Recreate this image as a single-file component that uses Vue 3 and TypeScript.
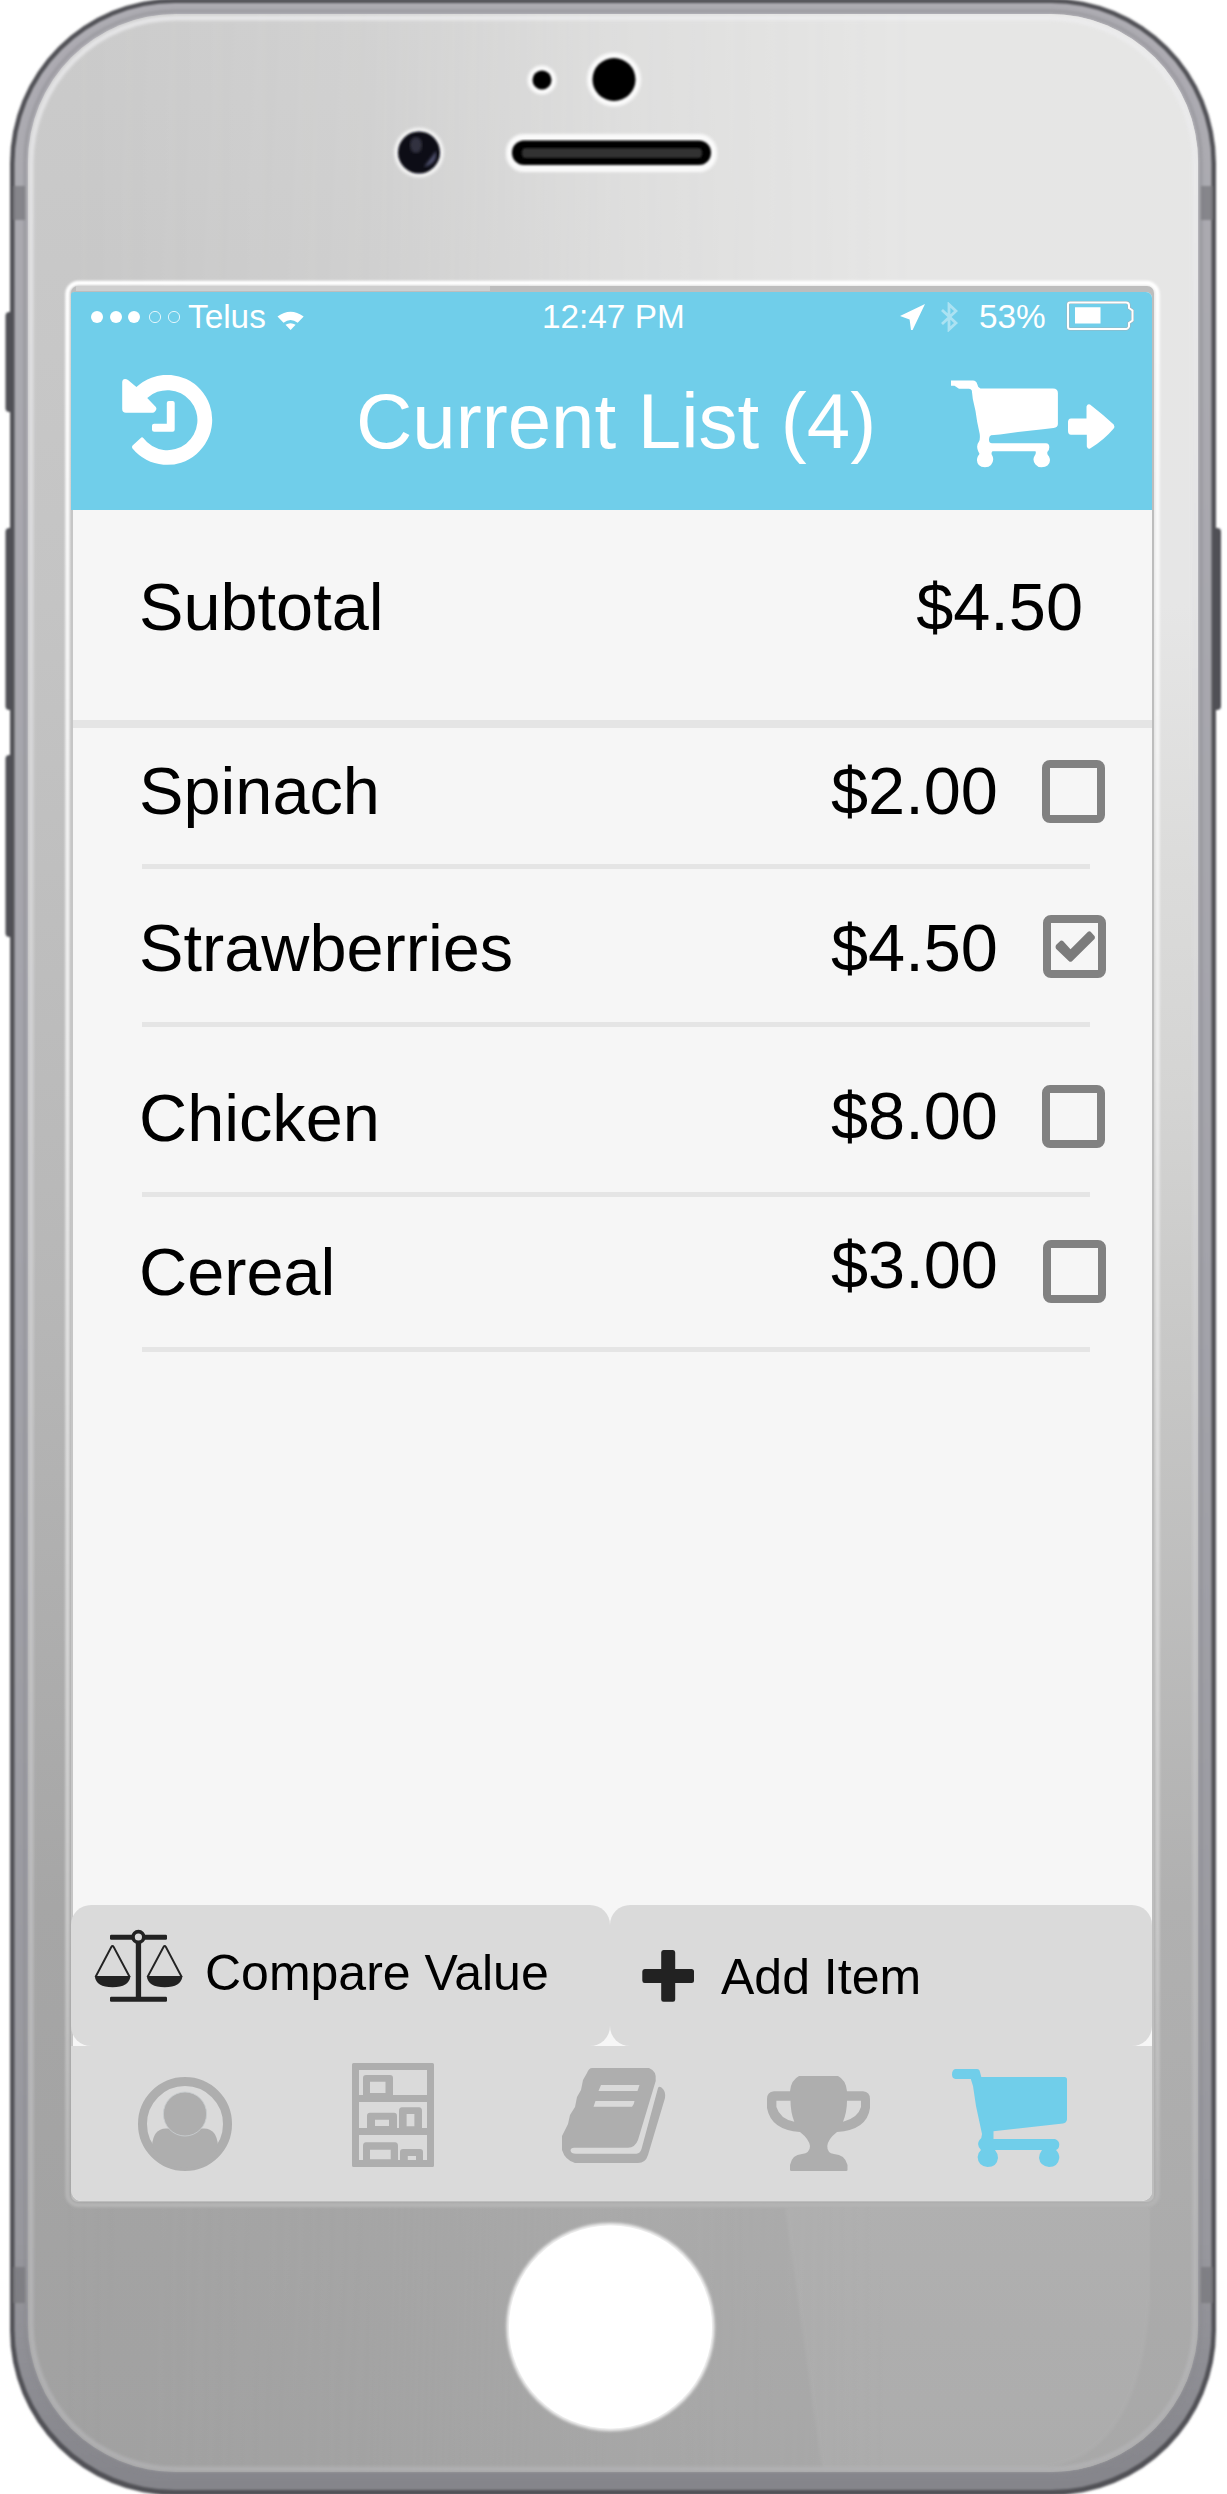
<script setup lang="ts">
import { ref, computed } from 'vue'

interface Item {
  id: string
  name: string
  price: number
  checked: boolean
}

const items = ref<Item[]>([
  { id: 'spinach', name: 'Spinach', price: 2, checked: false },
  { id: 'strawberries', name: 'Strawberries', price: 4.5, checked: true },
  { id: 'chicken', name: 'Chicken', price: 8, checked: false },
  { id: 'cereal', name: 'Cereal', price: 3, checked: false },
])

const money = (n: number): string => `$${n.toFixed(2)}`
const subtotal = computed(() =>
  items.value.filter((i) => i.checked).reduce((sum, i) => sum + i.price, 0),
)
</script>

<template>
  <div class="phone">
    <!-- Handset body -->
    <svg class="chassis" viewBox="0 0 1227 2494" aria-hidden="true">
      <defs>
        <linearGradient id="faceL" x1="0" y1="0" x2="0" y2="1">
          <stop offset="0" stop-color="#cbcbcb" />
          <stop offset="0.24" stop-color="#c4c4c4" />
          <stop offset="0.52" stop-color="#b7b7b7" />
          <stop offset="0.77" stop-color="#a6a6a6" />
          <stop offset="1" stop-color="#a1a1a1" />
        </linearGradient>
        <linearGradient id="faceR" x1="0" y1="0" x2="0" y2="1">
          <stop offset="0" stop-color="#e6e6e5" />
          <stop offset="0.24" stop-color="#e6e6e6" />
          <stop offset="0.34" stop-color="#dcdcdb" />
          <stop offset="0.44" stop-color="#d4d4d3" />
          <stop offset="0.54" stop-color="#c8c8c7" />
          <stop offset="0.77" stop-color="#b0b0b0" />
          <stop offset="1" stop-color="#a8a8a8" />
        </linearGradient>
        <linearGradient id="fade" x1="0" y1="0" x2="1" y2="0">
          <stop offset="0.05" stop-color="#000" />
          <stop offset="0.3" stop-color="#444" />
          <stop offset="0.5" stop-color="#b4b4b4" />
          <stop offset="0.75" stop-color="#fff" />
        </linearGradient>
        <linearGradient id="rim" x1="0" y1="0" x2="0" y2="1">
          <stop offset="0" stop-color="#adacb2" />
          <stop offset="0.5" stop-color="#a4a4ab" />
          <stop offset="0.9" stop-color="#98989e" />
          <stop offset="1" stop-color="#85858b" />
        </linearGradient>
        <linearGradient id="edge" x1="0" y1="0" x2="0" y2="1">
          <stop offset="0" stop-color="#eeeef0" />
          <stop offset="0.5" stop-color="#d4d4d6" />
          <stop offset="1" stop-color="#b4b4b6" />
        </linearGradient>
        <linearGradient id="lip" x1="0" y1="0" x2="0" y2="1">
          <stop offset="0" stop-color="#ffffff" />
          <stop offset="0.4" stop-color="#ececec" />
          <stop offset="0.85" stop-color="#c9c9c9" />
          <stop offset="1" stop-color="#b4b4b4" />
        </linearGradient>
        <mask id="sweep"><rect width="1227" height="2494" fill="url(#fade)" /></mask>
        <filter id="soft" x="-5%" y="-5%" width="110%" height="110%"><feGaussianBlur stdDeviation="1.6" /></filter>
        <filter id="faint" x="-5%" y="-5%" width="110%" height="110%"><feGaussianBlur stdDeviation=".8" /></filter>
      </defs>

      <!-- Side keys -->
      <g fill="#4f5055" filter="url(#faint)">
        <rect x="5.500" y="312" width="14" height="100" rx="4" />
        <rect x="5.500" y="528" width="14" height="182" rx="4" />
        <rect x="5.500" y="755" width="14" height="182" rx="4" />
        <rect x="1206" y="528" width="15" height="182" rx="4" />
      </g>
      <rect x="10" y="-1.500" width="1206" height="2497" rx="165" fill="#515156" filter="url(#faint)" />
      <rect x="14.500" y="3" width="1197" height="2487" rx="160.500" fill="url(#rim)" filter="url(#faint)" />
      <rect x="25" y="11" width="1176" height="2464" rx="150" fill="none" stroke="#88888d" stroke-width="3" opacity=".5" filter="url(#soft)" />
      <g fill="#77777b" opacity=".7" filter="url(#faint)">
        <rect x="13" y="186" width="12" height="34" />
        <rect x="1201" y="186" width="12" height="34" />
        <rect x="13" y="2267" width="12" height="36" />
        <rect x="1201" y="2267" width="12" height="36" />
      </g>
      <rect x="28" y="14" width="1170" height="2458" rx="148" fill="url(#faceL)" />
      <rect x="28" y="14" width="1170" height="2458" rx="148" fill="url(#faceR)" mask="url(#sweep)" />
      <path d="M785 2208H1150V2300Q1140 2460 1040 2468H822Z" fill="#fff" opacity=".05" filter="url(#soft)" />
      <rect x="31" y="18" width="1164" height="2451" rx="145" fill="none" stroke="url(#edge)" stroke-width="5" opacity=".75" filter="url(#soft)" />

      <!-- Lip around the display -->
      <rect x="67.500" y="283" width="1090" height="1922" rx="11" fill="none" stroke="url(#lip)" stroke-width="4.500" filter="url(#faint)" />
      <rect x="71" y="286" width="1083" height="1916" rx="7" fill="#bdbdbd" />
      <path d="M76 288.500H490" stroke="#cfcfcf" stroke-width="5" />
      <path d="M490 289H1149" stroke="#9d9d9d" stroke-width="4" filter="url(#faint)" />
      <path d="M80 2204H1144" stroke="#acacac" stroke-width="6" filter="url(#faint)" />

      <!-- Sensors, camera and earpiece -->
      <g filter="url(#soft)" fill="#fafafa">
        <circle cx="542" cy="80" r="14.500" />
        <circle cx="614" cy="79.500" r="27" />
        <circle cx="419" cy="152.500" r="25" opacity=".8" />
        <rect x="506" y="134" width="211" height="38" rx="18" />
      </g>
      <g filter="url(#faint)">
        <circle cx="542" cy="80" r="9.500" fill="#020202" />
        <circle cx="614" cy="79.500" r="21.500" fill="#000" />
        <circle cx="419" cy="152.500" r="21" fill="#0a0b18" />
      </g>
      <ellipse cx="416" cy="145" rx="6" ry="8" fill="#30303f" filter="url(#soft)" />
      <path d="M424 167L436 151Q438 164 424 167Z" fill="#4b4d69" filter="url(#soft)" />
      <rect x="512" y="140.500" width="199" height="24.500" rx="12" fill="#050505" filter="url(#faint)" />
      <rect x="522" y="148" width="180" height="10" rx="4" fill="#333" filter="url(#faint)" />

      <!-- Home key -->
      <circle cx="610.500" cy="2327" r="104" fill="#f2f2f2" filter="url(#soft)" />
      <circle cx="610.500" cy="2327" r="101.500" fill="#fff" />
    </svg>

    <main class="screen">
      <header class="header">
        <div class="status">
          <svg class="signal" viewBox="91 311 89 12" fill="#fff">
            <circle cx="97" cy="317" r="6" /><circle cx="116" cy="317" r="6" /><circle cx="134" cy="317" r="6" />
            <g fill="none" stroke="#fff" stroke-width=".8"><circle cx="155" cy="317" r="5.600" /><circle cx="174" cy="317" r="5.600" /></g>
          </svg>
          <span class="carrier">Telus</span>
          <svg class="wifi" viewBox="277 304 27 26" fill="#fff">
            <path d="M277.500 316.500Q290.500 307 303.700 316.500L297.700 322.700Q290.500 317.500 283.500 322.700Z" />
            <path d="M285.500 324.800Q290.500 321.500 295.600 324.800L290.600 330Z" />
          </svg>
          <span class="time">12:47 PM</span>
          <svg class="locate" viewBox="900 304 25 26" fill="#fff"><path d="M900 316L925 304L912.600 330H911L909.600 319.600Z" /></svg>
          <svg class="bluetooth" viewBox="940 302 18 30" fill="none" stroke="#fff" stroke-width="2.800">
            <path d="M942 310L956 323L949 329.500V304.500L956 311L942 324" />
          </svg>
          <span class="percent">53%</span>
          <svg class="battery" viewBox="1066 301 68 30" fill="none">
            <path d="M1070 302.500H1126Q1129 302.500 1129 305.500V308L1132.500 310.500V320.500L1129 323V326.500Q1128 329 1126 329H1070Q1068 329 1068 327V304.500Q1068 302.500 1070 302.500Z" stroke="#9ab4be" stroke-width="3.200" />
            <path d="M1070 302.500H1126Q1129 302.500 1129 305.500V308L1132.500 310.500V320.500L1129 323V326.500Q1128 329 1126 329H1070Q1068 329 1068 327V304.500Q1068 302.500 1070 302.500Z" stroke="#fff" stroke-width="2" />
            <path d="M1075 307.300H1100.500V323.600H1075Z" fill="#fff" />
          </svg>
        </div>
        <div class="titlebar">
          <svg class="history" viewBox="122 375 91 91" fill="#fff">
            <path d="M136.400 387A45 45 0 1 1 132.500 448.500Q131.500 447 132.600 445.500L141.300 437.500Q142.300 436.700 143.300 438A30 30 0 1 0 147.200 398L155.600 406.800Q157.500 409 155 411.500Q154 412.800 152.500 412.800H126Q122.200 412.800 122.200 409V382Q122.500 379 125 379Q126.500 379 128 380Z" />
            <path d="M168.800 401H172.600Q174.700 401 174.700 403V429.700Q174.700 431.800 172.600 431.800H154.200Q152 431.800 152 429.700V425.700Q152 423.700 154.200 423.700H166.800V403Q166.800 401 168.800 401Z" />
          </svg>
          <h1>Current List (4)</h1>
          <svg class="checkout" viewBox="951 380 164 88" fill="#fff">
            <path d="M951 380.500H973Q976.300 380.500 977.200 384L978.300 387L980.500 388.400H1053Q1057.900 388.400 1057.900 393V424Q1057.900 427.500 1053.500 428L1043 429.200L1018 432L1000 434.600L991 435.200Q988.800 436 989 440Q989.200 443.300 992 443.300H1046Q1049.500 443.600 1049.300 447.500Q1049.300 450 1047.500 451.800Q1046.500 454 1049 456.500Q1051.500 462 1047.500 465.500Q1045.500 467.200 1041.500 467.200Q1037.500 467.200 1035.500 464.500Q1032 460 1034.500 456Q1036.500 453.500 1035.500 451.300H992.500Q990.500 453.500 992.500 456Q994.500 460.500 991 465Q989 467.200 985 467.200Q981 467.200 978.800 465Q975.500 461 978 456Q980.500 454 978.500 452Q975.500 446 979 441.500Q980.300 439 979.700 434L977.200 422L975.500 411L972.800 399L971.800 390.500Q971 389 969 388.800H959L954.500 385.800H951Z" />
            <path d="M1071 418.400H1086.500V406.500Q1087.500 403.500 1090 404.500L1103 415L1113.700 424.500Q1115 426.500 1113.700 428.500Q1104 440 1090.500 448.200Q1088 450 1086.800 446.500V434.800H1071Q1068 434.500 1068 431V422Q1068 418.800 1071 418.400Z" />
          </svg>
        </div>
      </header>

      <section class="subtotal">
        <span>Subtotal</span>
        <span>{{ money(subtotal) }}</span>
      </section>

      <ul class="list">
        <li v-for="item in items" :key="item.id" :class="['row', item.id]">
          <span class="name">{{ item.name }}</span>
          <span class="price">{{ money(item.price) }}</span>
          <span class="box" role="checkbox" :aria-checked="item.checked" @click="item.checked = !item.checked">
            <svg v-if="item.checked" viewBox="0 0 40 32"><path d="M.5 16L1 14L5.500 9.800Q7 9.200 8 10L15.500 18.300L33 .7Q34.500 -.2 35.700 .7L39.700 5.200Q40.200 7 39.500 8L17 30.300Q15.500 31.300 14.300 30.500L1 17.700Z" fill="#7b7b7b" /></svg>
          </span>
        </li>
      </ul>

      <div class="actions">
        <button class="action compare" type="button">
          <svg viewBox="94 1929 89 74" fill="#222">
            <rect x="110" y="1934.700" width="57" height="5" rx="1.200" />
            <rect x="110" y="1996.700" width="57" height="5" rx="1.200" />
            <rect x="135.800" y="1940" width="5.300" height="58" />
            <circle cx="138.400" cy="1937" r="5.400" fill="#dadada" stroke="#222" stroke-width="3.600" />
            <g fill="none" stroke="#222" stroke-width="1.900" stroke-linejoin="round">
              <path d="M95.500 1977L111.300 1947Q112.500 1945 113.700 1947L129.700 1977" />
              <path d="M147.500 1977L163.500 1947Q164.700 1945 165.900 1947L181.700 1977" />
            </g>
            <path d="M94.800 1976H130.500Q129 1987.300 112.600 1987.300Q96 1987.300 94.800 1976Z" />
            <path d="M146.800 1976H182.500Q181 1987.300 164.700 1987.300Q148 1987.300 146.800 1976Z" />
          </svg>
          <span>Compare Value</span>
        </button>
        <button class="action add" type="button">
          <svg viewBox="642 1950 52 52" fill="#222">
            <path d="M663.500 1950H673Q675.200 1950 675.200 1952.500V1969H691.500Q694 1969 694 1971.500V1980.500Q694 1983 691.500 1983H675.200V1999.500Q675.200 2001.800 673 2001.800H663.500Q661.200 2001.800 661.200 1999.500V1983H644.700Q642.300 1983 642.300 1980.500V1971.500Q642.300 1969 644.700 1969H661.200V1952.500Q661.200 1950 663.500 1950Z" />
          </svg>
          <span>Add Item</span>
        </button>
      </div>

      <nav class="tabs">
        <svg class="tab-user" viewBox="138 2077 94 94">
          <circle cx="185" cy="2124" r="42.500" fill="none" stroke="#aeaeae" stroke-width="9" />
          <path d="M152 2146Q153 2129 166 2128.600H204Q217 2129 218 2146L214 2157Q201 2168 185 2168Q168 2168 156 2157Z" fill="#aeaeae" />
          <ellipse cx="185" cy="2114" rx="21.600" ry="22" fill="#aeaeae" stroke="#c8cdcf" stroke-width=".9" />
        </svg>
        <svg class="tab-shelf" viewBox="352 2063 82 104" fill="#aeaeae">
          <path fill-rule="evenodd" d="M353.500 2063H432.500Q434 2063 434 2064.500V2165.500Q434 2167 432.500 2167H353.500Q352 2167 352 2165.500V2064.500Q352 2063 353.500 2063ZM359 2070V2095H427V2070ZM359 2102V2128H427V2102ZM359 2135V2160H427V2135Z" />
          <path fill-rule="evenodd" d="M363 2096V2078Q363 2075 366 2075H390Q393 2075 393 2078V2096ZM370 2081.700V2093H385.500V2081.700Z" />
          <path fill-rule="evenodd" d="M367 2129V2116Q367 2112.700 370 2112.700H394Q397 2112.700 397 2116V2129ZM375 2119.700V2126H389V2119.700Z" />
          <path fill-rule="evenodd" d="M399 2129V2111Q399 2107.300 402 2107.300H419Q422 2107.300 422 2111V2129ZM406.600 2114V2126.300H414.400V2114Z" />
          <path fill-rule="evenodd" d="M363 2161V2146Q363 2142.300 366 2142.300H395Q398 2142.300 398 2146V2161ZM370 2149.700V2159.300H390.700V2149.700Z" />
          <path fill-rule="evenodd" d="M400 2161V2152Q400 2149 403 2149H420Q423 2149 423 2152V2161ZM407.800 2156V2160H416V2156Z" />
        </svg>
        <svg class="tab-book" viewBox="562 2068 104 95" fill="#aeaeae">
          <path d="M592 2068H649Q657 2071 655.700 2081L638 2140Q635 2147.700 628 2147.700H574Q570.500 2148 570.500 2150.500Q571 2153.700 576 2153.700H636.500Q640 2153.500 641.500 2149L658 2088Q659 2086 661.500 2087.500Q666 2091 665 2098L648 2155Q645.500 2163 638 2163H575Q565 2160 562 2150V2136L568 2124L570 2115L575 2107L577 2097L581 2090L583 2080L587 2073Q589 2068 592 2068Z" />
          <g fill="#dadada"><path d="M601 2085H639.500L637.500 2091H598.500Z" /><path d="M595.500 2101H634.500Q634 2105 632 2106.700H593.500Z" /></g>
        </svg>
        <svg class="tab-trophy" viewBox="767 2076 103 95" fill="#aeaeae">
          <path fill-rule="evenodd" d="M799 2076H838Q846 2080 847 2091.300H863Q870 2092 870 2099V2108Q867 2130 837 2132Q828 2139 827.300 2146Q827 2153 834 2154Q845 2154.500 847.500 2165V2170Q847.500 2171 846 2171H791.500Q790 2171 790 2170V2165Q792 2154.500 802 2154Q810 2153 810 2146Q809 2139 800 2132Q771 2130 767 2108V2099Q767 2092 774 2091.300H790Q791 2080 799 2076ZM776.400 2100.700V2107Q780 2119 794.300 2121.700Q790.500 2112 790.500 2100.700ZM847 2100.700Q847 2112 843 2121.700Q858 2118 861 2107V2100.700Z" />
        </svg>
        <svg class="tab-cart" viewBox="952 2069 115 98" fill="#70ceea">
          <path d="M955.500 2069H977Q979.500 2069 980 2072L981.300 2077H1064.500Q1067 2077 1067 2079.500V2119.500Q1066.500 2123 1063 2123.400L993.500 2131.300V2139H1055Q1059.300 2140.500 1059.300 2144.500Q1059 2149 1056 2150Q1059.300 2153 1059.300 2158Q1058 2167 1049 2167Q1040 2166 1039 2158Q1039.500 2153 1042 2150H995Q998 2153.500 998 2158Q997 2167 987.500 2167Q978 2166 977.600 2157Q978 2152.500 981 2150Q976 2145 979.500 2140Q982 2138 982 2134L976 2106L973 2086L970.800 2079H955.500Q952 2078.500 952 2074.500Q952 2069.500 955.500 2069Z" />
        </svg>
      </nav>
    </main>
  </div>
</template>

<style>
body {
  background: #fff;
}
</style>

<style scoped>
.phone {
  position: relative;
  box-sizing: border-box;
  width: 1227px;
  height: 2494px;
  padding: 292px 75px 0 71px;
  overflow: hidden;
  font-family: "Liberation Sans", Arial, Helvetica, sans-serif;
  color: #000;
}
svg {
  display: block;
  flex: none;
}
.chassis {
  position: absolute;
  top: 0;
  left: 0;
  width: 1227px;
  height: 2494px;
}
.screen {
  position: relative;
  display: flex;
  flex-direction: column;
  width: 1081px;
  height: 1909px;
  overflow: hidden;
  border-radius: 3px 6px 10px 11px;
  background: linear-gradient(90deg, #c6c6c6 2px, #f6f6f6 2px);
}
.header {
  flex: none;
  height: 218px;
  background: #70ceea;
  color: #fff;
}
.status {
  display: flex;
  align-items: center;
  height: 50px;
  font-size: 33.33px;
  line-height: 40px;
  white-space: nowrap;
}
.status span { flex: none; }
.signal { width: 89px; height: 12px; margin-left: 20px; }
.carrier { width: 81px; margin-left: 8px; }
.wifi { width: 27px; height: 26px; margin-left: 8px; }
.time { width: 150px; margin-left: 238px; }
.locate { width: 25px; height: 26px; margin-left: 208px; }
.bluetooth { width: 18px; height: 30px; margin-left: 15px; opacity: .42; }
.percent { width: 70px; margin-left: 21px; }
.battery { width: 68px; height: 30px; margin: -2px 0 0 17px; }
.titlebar {
  display: flex;
  align-items: flex-start;
  height: 168px;
}
.history { width: 91px; height: 91px; margin: 33px 0 0 51px; }
h1 {
  flex: none;
  width: 530px;
  margin: 35px 0 0 143px;
  font-size: 78px;
  font-weight: 400;
  line-height: 88px;
  white-space: nowrap;
}
.checkout { width: 164px; height: 88px; margin: 38px 0 0 65px; }
.subtotal {
  display: flex;
  flex: none;
  box-sizing: border-box;
  justify-content: space-between;
  height: 218px;
  margin-left: 2px;
  padding: 65px 69px 0 66px;
  border-bottom: 8px solid #e5e5e5;
  font-size: 66.67px;
  line-height: 64px;
}
.list {
  flex: none;
  height: 1177px;
  margin: 0;
  padding: 0 62px 0 71px;
  list-style: none;
  font-size: 66.67px;
  line-height: 64px;
}
.row {
  display: flex;
  box-sizing: border-box;
  align-items: flex-start;
  border-bottom: 5px solid #e5e5e5;
}
.name { flex: none; width: 688px; margin-left: -3px; }
.price { flex: none; width: 211px; margin-left: 4px; }
.box {
  display: flex;
  flex: none;
  box-sizing: border-box;
  align-items: center;
  justify-content: center;
  width: 63px;
  height: 63px;
  border: 8px solid #818181;
  border-radius: 8px;
}
.box svg { width: 40px; height: 32px; }
.spinach { height: 141px; padding-top: 31px; }
.spinach .box { margin-top: 1px; }
.strawberries { height: 158px; padding-top: 46px; }
.strawberries .name,
.strawberries .price { margin-top: 1px; }
.strawberries .box { margin-left: 1px; }
.chicken { height: 170px; padding-top: 57px; }
.chicken .name { margin-top: 2px; }
.chicken .box { margin-top: 1px; }
.cereal { height: 155px; padding-top: 36px; }
.cereal .name { margin-top: 7px; }
.cereal .box { margin: 7px 0 0 1px; }
.actions {
  display: flex;
  flex: none;
  height: 141px;
}
.action {
  display: flex;
  align-items: flex-start;
  padding: 0;
  border: 0;
  border-radius: 20px;
  background: #dadada;
  color: #000;
  font: 50px/56px "Liberation Sans", Arial, Helvetica, sans-serif;
  white-space: nowrap;
}
.compare { width: 539px; }
.compare svg { width: 89px; height: 74px; margin: 24px 0 0 23px; }
.compare span { margin: 40px 0 0 22px; }
.add { width: 542px; }
.add svg { width: 52px; height: 52px; margin: 45px 0 0 32px; }
.add span { margin: 44px 0 0 27px; }
.tabs {
  display: flex;
  flex: 1;
  align-items: flex-start;
  background: #dadada;
}
.tab-user { width: 94px; height: 94px; margin: 31px 0 0 67px; }
.tab-shelf { width: 82px; height: 104px; margin: 17px 0 0 120px; }
.tab-book { width: 104px; height: 95px; margin: 22px 0 0 128px; }
.tab-trophy { width: 103px; height: 95px; margin: 30px 0 0 101px; }
.tab-cart { width: 115px; height: 98px; margin: 23px 0 0 82px; }
</style>
